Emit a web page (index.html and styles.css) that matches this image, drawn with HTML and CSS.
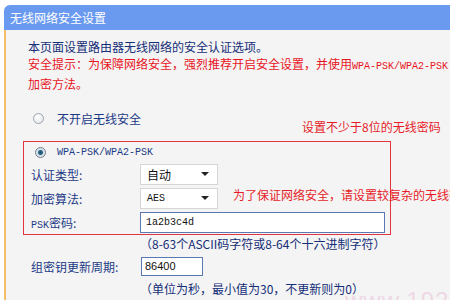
FILE: index.html
```html
<!DOCTYPE html>
<html>
<head>
	<title>无线网络安全设置</title>
	<link rel="stylesheet" href="styles.css">
</head>
<body>
	<div class="panel">
		<div class="title">无线网络安全设置</div>
		<div class="content">
			<p class="intro">
				本页面设置路由器无线网络的安全认证选项。<br>
				<span class="warn">安全提示：为保障网络安全，强烈推荐开启安全设置，并使用<span class="mono">WPA-PSK/WPA2-PSK AES</span><br>加密方法。</span>
			</p>
			<div class="option">
				<span class="radio"></span>
				<span>不开启无线安全</span>
			</div>
			<div class="group">
				<div class="option option-in">
					<span class="radio checked"></span>
					<span class="mono">WPA-PSK/WPA2-PSK</span>
				</div>
				<div class="row">
					<span class="label">认证类型:</span>
					<div class="select">自动<i class="arrow"></i></div>
				</div>
				<div class="row">
					<span class="label">加密算法:</span>
					<div class="select"><span class="mono">AES</span><i class="arrow"></i></div>
				</div>
				<div class="row">
					<span class="label"><span class="mono">PSK</span>密码:</span>
					<div class="input input-psk mono">1a2b3c4d</div>
				</div>
			</div>
			<div class="hint">（8-63个ASCII码字符或8-64个十六进制字符）</div>
			<div class="row row-out">
				<span class="label">组密钥更新周期:</span>
				<div class="input input-num">86400</div>
			</div>
			<div class="hint">（单位为秒，最小值为30，不更新则为0）</div>
		</div>
	</div>
	<div class="note note-top">设置不少于8位的无线密码</div>
	<div class="note note-mid">为了保证网络安全，请设置较复杂的无线密码</div>
	<div class="watermark">www.192ly.com</div>
</body>
</html>
```

FILE: styles.css
```css
html, body {
	margin: 0;
	height: 300px;
	overflow: hidden;
}
body {
	position: relative;
	background-color: #fff;
	font-family: "Noto Sans CJK SC", sans-serif;
	font-size: 12px;
	color: #1c3a86;
}
.mono {
	font-family: "Liberation Mono", monospace;
	font-size: 10px;
}
.panel {
	margin: 5px 0 0 4px;
}
.title {
	height: 25px;
	line-height: 25px;
	padding-left: 6px;
	background-color: #6a9af0;
	border-radius: 6px 0 0 0;
	color: #fff;
	font-size: 12px;
}
.content {
	height: 270px;
	padding: 8px 0 0 17px;
	background-color: #f4f4f4;
	border-left: 2px solid #f3bd6a;
}
.intro {
	margin: 0 0 0 5px;
	line-height: 17px;
	white-space: nowrap;
	color: #142e78;
}
.warn {
	color: #e8141e;
}
.option {
	display: flex;
	align-items: center;
	height: 20px;
	margin-top: 16px;
	padding-left: 10px;
	color: #1c3a86;
}
.option .radio {
	margin-right: 13px;
}
.option-in {
	margin-top: 0;
	padding-left: 11px;
}
.option-in .radio {
	margin-right: 11px;
}
.radio {
	box-sizing: border-box;
	width: 11px;
	height: 11px;
	border: 1px solid #9aa4ae;
	border-radius: 50%;
	background: radial-gradient(circle at 40% 35%, #fff, #dfe3e6);
}
.radio.checked {
	border-color: #6a7d8c;
	background: radial-gradient(circle, #1f4f6e 0, #2c6a8a 2px, #cfd9e0 3px, #f2f4f6 5px);
}
.group {
	box-sizing: border-box;
	width: 368px;
	margin-top: 13px;
	padding-left: 7px;
	border: 1px solid #e2343c;
}
.group .option-in {
	margin-left: -7px;
}
.row {
	display: flex;
	align-items: center;
	height: 24px;
}
.label {
	width: 109px;
	flex-shrink: 0;
}
.select {
	box-sizing: border-box;
	display: flex;
	align-items: center;
	justify-content: space-between;
	width: 78px;
	height: 21px;
	padding: 0 8px 0 6px;
	background-color: #fff;
	border: 1px solid #d6d6d6;
	color: #111;
}
.arrow {
	width: 0;
	height: 0;
	border-top: 4px solid #222;
	border-left: 4px solid transparent;
	border-right: 4px solid transparent;
}
.input {
	box-sizing: border-box;
	display: flex;
	align-items: center;
	background-color: #fff;
	border: 1px solid #5a78b4;
	color: #111;
}
.input-psk {
	width: 245px;
	height: 21px;
	padding-left: 5px;
}
.input-num {
	width: 62px;
	height: 19px;
	padding-left: 3px;
	font-family: "Liberation Sans", sans-serif;
	font-size: 11px;
}
.hint {
	height: 18px;
	line-height: 18px;
	padding-left: 117px;
	white-space: nowrap;
	color: #142e78;
}
.row-out {
	height: 26px;
	padding-left: 8px;
}
.row-out .label {
	width: 110px;
}
.row-out + .hint {
	height: 20px;
	line-height: 20px;
}
.note {
	position: absolute;
	color: #e61c28;
	line-height: 16px;
	white-space: nowrap;
}
.note-top {
	left: 302px;
	top: 119px;
}
.note-mid {
	left: 233px;
	top: 187px;
}
.watermark {
	position: absolute;
	left: 345px;
	top: 287px;
	font-family: "Liberation Sans", sans-serif;
	font-size: 24px;
	letter-spacing: 1px;
	color: #efd8e6;
	white-space: nowrap;
}
```
